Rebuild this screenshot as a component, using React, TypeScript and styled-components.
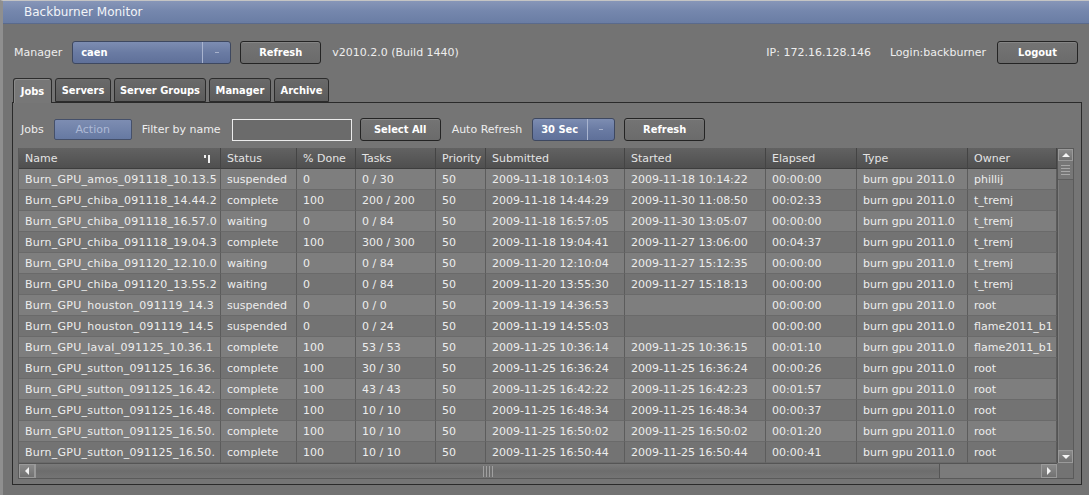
import React from 'react';
import styled, { createGlobalStyle } from 'styled-components';

const GlobalStyle = createGlobalStyle`
  html, body {
    margin: 0;
    padding: 0;
    background: #727272;
  }
  body {
    font-family: "DejaVu Sans", "Liberation Sans", sans-serif;
    font-size: 11px;
    color: #ececec;
  }
`;

const boldFont = `
  font-family: "DejaVu Sans Condensed", "DejaVu Sans", "Liberation Sans Narrow", sans-serif;
  font-stretch: condensed;
  font-size: 11px;
  font-weight: bold;
`;

const Window = styled.div`
  width: 1089px;
  height: 495px;
  box-sizing: border-box;
  background: #737373;
  border-left: 3px solid #8f8f8f;
  border-top: 1px solid #c4c4c4;
  display: flex;
  flex-direction: column;
  overflow: hidden;
`;

const TitleBar = styled.div`
  height: 22px;
  flex: none;
  display: flex;
  align-items: center;
  padding-left: 21px;
  background: linear-gradient(#8796b8, #7587ad 45%, #6a7da4);
  border-bottom: 1px solid #5a6a8c;
  color: #f2f4f8;
  font-size: 12px;
`;

const ManagerRow = styled.div`
  display: flex;
  align-items: center;
  height: 23px;
  margin-top: 17px;
  padding: 0 11px 0 11px;
`;

const Label = styled.span<{ $ml?: number; $mr?: number }>`
  white-space: nowrap;
  margin-left: ${({ $ml }) => $ml ?? 0}px;
  margin-right: ${({ $mr }) => $mr ?? 0}px;
  color: #eeeeee;
`;

const Spacer = styled.div`
  flex: 1;
`;

const Combo = styled.div<{ $w: number; $split: number }>`
  width: ${({ $w }) => $w}px;
  height: 23px;
  box-sizing: border-box;
  display: grid;
  grid-template-columns: ${({ $split }) => $split}px 1fr;
  border: 1px solid #3e4860;
  border-radius: 3px;
  background: linear-gradient(#7d8db2, #6a7ba3 50%, #5f7099);
  ${boldFont}
  color: #ffffff;
`;

const ComboText = styled.div`
  display: flex;
  align-items: center;
  padding-left: 8px;
  border-right: 1px solid #a9b4cf;
`;

const ComboArrow = styled.div`
  display: flex;
  align-items: center;
  justify-content: center;
  &::after {
    content: '';
    width: 4px;
    height: 1px;
    background: #a8b2cc;
  }
`;

const Button = styled.button<{ $w: number }>`
  width: ${({ $w }) => $w}px;
  height: 23px;
  box-sizing: border-box;
  border: 1px solid #242424;
  border-radius: 3px;
  background: linear-gradient(#747474, #6b6b6b);
  box-shadow: inset 0 1px 0 #858585;
  color: #ffffff;
  ${boldFont}
  padding: 0;
  cursor: pointer;
`;

const ActionButton = styled.button`
  width: 78px;
  height: 21px;
  box-sizing: border-box;
  border: 1px solid #45506a;
  border-radius: 2px;
  background: linear-gradient(#7d8db2, #6679a2);
  color: #aebad6;
  font-family: "DejaVu Sans", "Liberation Sans", sans-serif;
  font-size: 11px;
  padding: 0;
`;

const FilterInput = styled.input`
  width: 120px;
  height: 22px;
  box-sizing: border-box;
  border: 1px solid #ececec;
  background: #6b6b6b;
  color: #fff;
  padding: 0 4px;
  outline: none;
`;

const TabStrip = styled.div`
  display: flex;
  gap: 3px;
  margin-top: 14px;
  padding-left: 10px;
  height: 24px;
  align-items: flex-end;
  position: relative;
  z-index: 1;
`;

const Tab = styled.div<{ $w: number; $active?: boolean }>`
  width: ${({ $w }) => $w}px;
  height: ${({ $active }) => ($active ? 25 : 24)}px;
  box-sizing: border-box;
  display: flex;
  align-items: center;
  justify-content: center;
  ${boldFont}
  color: #ffffff;
  border: 1px solid #2c2c2c;
  border-bottom: ${({ $active }) => ($active ? 'none' : '1px solid #2c2c2c')};
  border-radius: 3px 3px 0 0;
  background: ${({ $active }) =>
    $active ? '#777777' : 'linear-gradient(#6a6a6a, #5c5c5c)'};
  margin-bottom: ${({ $active }) => ($active ? -1 : 0)}px;
  box-shadow: ${({ $active }) => ($active ? 'inset 1px 1px 0 #8a8a8a' : 'none')};
`;

const Panel = styled.div`
  margin: 0 7px 0 9px;
  height: 383px;
  box-sizing: border-box;
  border: 1px solid #2a2a2a;
  background: #757575;
  padding: 15px 9px 5px 5px;
  display: flex;
  flex-direction: column;
`;

const Toolbar = styled.div`
  display: flex;
  align-items: center;
  height: 23px;
  padding-left: 3px;
`;

const Table = styled.div`
  margin-top: 7px;
  display: grid;
  grid-template-columns: 1038px 16px;
  grid-template-rows: 315px 15px;
  border: 1px solid #5a5a5a;
  border-top: none;
  width: 1054px;
  box-sizing: content-box;
`;

const Grid = styled.div`
  display: flex;
  flex-direction: column;
  overflow: hidden;
`;

const Row = styled.div<{ $kind: 'head' | 'odd' | 'even' }>`
  display: grid;
  grid-template-columns: 202px 76px 59px 80px 50px 139px 141px 91px 111px 89px;
  height: 21px;
  flex: none;
  background: ${({ $kind }) =>
    $kind === 'head'
      ? 'linear-gradient(#626262, #4e4e4e)'
      : $kind === 'odd'
        ? '#7e7e7e'
        : '#737373'};
  color: ${({ $kind }) => ($kind === 'head' ? '#e4e4e4' : '#ededed')};
`;

const Cell = styled.div`
  display: flex;
  align-items: center;
  padding-left: 6px;
  white-space: nowrap;
  overflow: hidden;
  border-right: 1px solid #5c5c5c;
  border-bottom: 1px solid #6a6a6a;
  position: relative;
`;

const NameText = styled.span`
  letter-spacing: 0.25px;
`;

const HeadCell = styled(Cell)`
  border-right: 1px solid #444444;
  border-bottom: 1px solid #3e3e3e;
`;

const SortIcon = styled.svg`
  position: absolute;
  right: 9px;
  top: 7px;
`;

const VScroll = styled.div`
  display: flex;
  flex-direction: column;
  background: #6c6c6c;
  border-left: 1px solid #545454;
  border-top: 1px solid #5a5a5a;
`;

const ArrowBtn = styled.div<{ $h: number; $w?: number }>`
  height: ${({ $h }) => $h}px;
  width: ${({ $w }) => ($w ? `${$w}px` : 'auto')};
  flex: none;
  display: flex;
  align-items: center;
  justify-content: center;
  background: linear-gradient(#8a8a8a, #727272);
  border: 1px solid #9a9a9a;
  box-sizing: border-box;
`;

const VThumb = styled.div`
  height: 18px;
  flex: none;
  display: flex;
  flex-direction: column;
  justify-content: center;
  gap: 2px;
  padding: 0 3px;
  background: #777777;
  border-bottom: 1px solid #5e5e5e;
  & > span {
    height: 1px;
    background: #a8a8a8;
  }
`;

const VTrack = styled.div`
  flex: 1;
  background: #6f6f6f;
  border-left: 1px solid #7d7d7d;
`;

const HScroll = styled.div`
  display: flex;
  align-items: stretch;
  background: #6c6c6c;
  border-top: 1px solid #555555;
`;

const HThumb = styled.div`
  width: 903px;
  flex: none;
  display: flex;
  align-items: center;
  justify-content: center;
  gap: 2px;
  background: linear-gradient(#7a7a7a, #6d6d6d 50%, #747474);
  border-left: 1px solid #999999;
  border-right: 1px solid #555555;
  & > span {
    width: 1px;
    height: 11px;
    background: #a0a0a0;
  }
`;

const HTrack = styled.div`
  flex: 1;
  background: #7b7b7b;
`;

const Corner = styled.div`
  background: #737373;
`;

type Job = [string, string, string, string, string, string, string, string, string, string];

const jobs: Job[] = [
  ['Burn_GPU_amos_091118_10.13.5', 'suspended', '0', '0 / 30', '50', '2009-11-18 10:14:03', '2009-11-18 10:14:22', '00:00:00', 'burn gpu 2011.0', 'phillij'],
  ['Burn_GPU_chiba_091118_14.44.2', 'complete', '100', '200 / 200', '50', '2009-11-18 14:44:29', '2009-11-30 11:08:50', '00:02:33', 'burn gpu 2011.0', 't_tremj'],
  ['Burn_GPU_chiba_091118_16.57.0', 'waiting', '0', '0 / 84', '50', '2009-11-18 16:57:05', '2009-11-30 13:05:07', '00:00:00', 'burn gpu 2011.0', 't_tremj'],
  ['Burn_GPU_chiba_091118_19.04.3', 'complete', '100', '300 / 300', '50', '2009-11-18 19:04:41', '2009-11-27 13:06:00', '00:04:37', 'burn gpu 2011.0', 't_tremj'],
  ['Burn_GPU_chiba_091120_12.10.0', 'waiting', '0', '0 / 84', '50', '2009-11-20 12:10:04', '2009-11-27 15:12:35', '00:00:00', 'burn gpu 2011.0', 't_tremj'],
  ['Burn_GPU_chiba_091120_13.55.2', 'waiting', '0', '0 / 84', '50', '2009-11-20 13:55:30', '2009-11-27 15:18:13', '00:00:00', 'burn gpu 2011.0', 't_tremj'],
  ['Burn_GPU_houston_091119_14.3', 'suspended', '0', '0 / 0', '50', '2009-11-19 14:36:53', '', '00:00:00', 'burn gpu 2011.0', 'root'],
  ['Burn_GPU_houston_091119_14.5', 'suspended', '0', '0 / 24', '50', '2009-11-19 14:55:03', '', '00:00:00', 'burn gpu 2011.0', 'flame2011_b1'],
  ['Burn_GPU_laval_091125_10.36.1', 'complete', '100', '53 / 53', '50', '2009-11-25 10:36:14', '2009-11-25 10:36:15', '00:01:10', 'burn gpu 2011.0', 'flame2011_b1'],
  ['Burn_GPU_sutton_091125_16.36.', 'complete', '100', '30 / 30', '50', '2009-11-25 16:36:24', '2009-11-25 16:36:24', '00:00:26', 'burn gpu 2011.0', 'root'],
  ['Burn_GPU_sutton_091125_16.42.', 'complete', '100', '43 / 43', '50', '2009-11-25 16:42:22', '2009-11-25 16:42:23', '00:01:57', 'burn gpu 2011.0', 'root'],
  ['Burn_GPU_sutton_091125_16.48.', 'complete', '100', '10 / 10', '50', '2009-11-25 16:48:34', '2009-11-25 16:48:34', '00:00:37', 'burn gpu 2011.0', 'root'],
  ['Burn_GPU_sutton_091125_16.50.', 'complete', '100', '10 / 10', '50', '2009-11-25 16:50:02', '2009-11-25 16:50:02', '00:01:20', 'burn gpu 2011.0', 'root'],
  ['Burn_GPU_sutton_091125_16.50.', 'complete', '100', '10 / 10', '50', '2009-11-25 16:50:44', '2009-11-25 16:50:44', '00:00:41', 'burn gpu 2011.0', 'root'],
];

const columns = ['Name', 'Status', '% Done', 'Tasks', 'Priority', 'Submitted', 'Started', 'Elapsed', 'Type', 'Owner'];

const Triangle: React.FC<{ dir: 'up' | 'down' | 'left' | 'right' }> = ({ dir }) => {
  const pts = {
    up: '0,5 4,1 8,5',
    down: '0,1 4,5 8,1',
    left: '5,0 1,4 5,8',
    right: '1,0 5,4 1,8',
  }[dir];
  const vertical = dir === 'up' || dir === 'down';
  return (
    <svg width={vertical ? 8 : 6} height={vertical ? 6 : 8} viewBox={vertical ? '0 0 8 6' : '0 0 6 8'}>
      <polygon points={pts} fill="#f4f4f4" />
    </svg>
  );
};

const App: React.FC = () => {
  return (
    <>
      <GlobalStyle />
      <Window>
        <TitleBar>Backburner Monitor</TitleBar>

        <ManagerRow>
          <Label $mr={10}>Manager</Label>
          <Combo $w={159} $split={130}>
            <ComboText>caen</ComboText>
            <ComboArrow />
          </Combo>
          <Label $mr={9} />
          <Button $w={81}>Refresh</Button>
          <Label $ml={11}>v2010.2.0 (Build 1440)</Label>
          <Spacer />
          <Label>IP: 172.16.128.146</Label>
          <Label $ml={19}>Login:backburner</Label>
          <Label $mr={11} />
          <Button $w={81}>Logout</Button>
        </ManagerRow>

        <TabStrip>
          <Tab $w={39} $active>Jobs</Tab>
          <Tab $w={56}>Servers</Tab>
          <Tab $w={92}>Server Groups</Tab>
          <Tab $w={62}>Manager</Tab>
          <Tab $w={55}>Archive</Tab>
        </TabStrip>

        <Panel>
          <Toolbar>
            <Label $mr={10}>Jobs</Label>
            <ActionButton disabled>Action</ActionButton>
            <Label $ml={10} $mr={11}>Filter by name</Label>
            <FilterInput />
            <Label $mr={8} />
            <Button $w={81}>Select All</Button>
            <Label $ml={11} $mr={10}>Auto Refresh</Label>
            <Combo $w={83} $split={55}>
              <ComboText>30 Sec</ComboText>
              <ComboArrow />
            </Combo>
            <Label $mr={9} />
            <Button $w={81}>Refresh</Button>
          </Toolbar>

          <Table>
            <Grid>
              <Row $kind="head">
                {columns.map((c, i) => (
                  <HeadCell key={c}>
                    {c}
                    {i === 0 && (
                      <SortIcon width="7" height="8" viewBox="0 0 7 8">
                        <rect x="0" y="0" width="2" height="3" fill="#f0f0f0" />
                        <rect x="4" y="0" width="2" height="8" fill="#f0f0f0" />
                      </SortIcon>
                    )}
                  </HeadCell>
                ))}
              </Row>
              {jobs.map((job, r) => (
                <Row key={r} $kind={r % 2 === 0 ? 'odd' : 'even'}>
                  {job.map((v, c) => (
                    <Cell key={c}>{c === 0 ? <NameText>{v}</NameText> : v}</Cell>
                  ))}
                </Row>
              ))}
            </Grid>

            <VScroll>
              <ArrowBtn $h={12}>
                <Triangle dir="up" />
              </ArrowBtn>
              <VThumb>
                <span />
                <span />
                <span />
                <span />
              </VThumb>
              <VTrack />
              <ArrowBtn $h={13}>
                <Triangle dir="down" />
              </ArrowBtn>
            </VScroll>

            <HScroll>
              <ArrowBtn $h={14} $w={16}>
                <Triangle dir="left" />
              </ArrowBtn>
              <HThumb>
                <span />
                <span />
                <span />
                <span />
              </HThumb>
              <HTrack />
              <ArrowBtn $h={14} $w={16}>
                <Triangle dir="right" />
              </ArrowBtn>
            </HScroll>
            <Corner />
          </Table>
        </Panel>
      </Window>
    </>
  );
};

export default App;
